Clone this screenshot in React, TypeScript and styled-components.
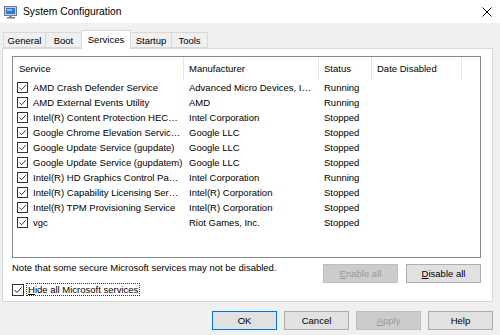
import styled, { createGlobalStyle } from "styled-components";

const GlobalStyle = createGlobalStyle`
  html, body {
    margin: 0;
    padding: 0;
    background: #f0f0f0;
  }
  body {
    font-family: "Liberation Sans", Arial, sans-serif;
    font-size: 9.5px;
    color: #000;
  }
  * {
    box-sizing: border-box;
  }
`;

const Window = styled.div`
  width: 500px;
  height: 335px;
  background: #f0f0f0;
  display: flex;
  flex-direction: column;
  overflow: hidden;
`;

const TitleBar = styled.div`
  height: 23px;
  background: #fff;
  display: flex;
  align-items: center;
  justify-content: space-between;
  padding: 0 8px 0 4px;
`;

const TitleLeft = styled.div`
  display: flex;
  align-items: center;
  gap: 5px;
  font-size: 10.3px;
`;

const TabStrip = styled.div`
  margin-top: 7px;
  padding-left: 3px;
  height: 18px;
  display: flex;
  align-items: flex-end;
  position: relative;
  z-index: 1;
`;

const Tab = styled.div<{ $w: number; $active?: boolean }>`
  width: ${(p) => p.$w}px;
  height: ${(p) => (p.$active ? 19 : 16)}px;
  margin-bottom: ${(p) => (p.$active ? -1 : 0)}px;
  margin-left: -1px;
  border: 1px solid #d9d9d9;
  border-bottom: ${(p) => (p.$active ? "none" : "1px solid #d9d9d9")};
  background: ${(p) => (p.$active ? "#fff" : "#f0f0f0")};
  display: flex;
  align-items: center;
  justify-content: center;
  padding-bottom: ${(p) => (p.$active ? 2 : 0)}px;
  &:first-child {
    margin-left: 0;
  }
`;

const Panel = styled.div`
  margin-left: 2px;
  width: 491px;
  height: 254px;
  border: 1px solid #d9d9d9;
  background: #fff;
  padding: 7px 0 0 9px;
  display: flex;
  flex-direction: column;
`;

const ListView = styled.div`
  width: 469px;
  height: 202px;
  border: 1px solid #828790;
  background: #fff;
`;

const cols = "171px 135px 53px 90px 1fr";

const HeaderRow = styled.div`
  height: 23px;
  display: grid;
  grid-template-columns: ${cols};
`;

const HeaderCell = styled.div`
  display: flex;
  align-items: center;
  padding-left: 5px;
  border-right: 1px solid #e5e5e5;
  &:first-child {
    padding-left: 6px;
  }
  &:last-child {
    border-right: none;
  }
`;

const Row = styled.div`
  height: 15px;
  display: grid;
  grid-template-columns: ${cols};
`;

const Cell = styled.div`
  display: flex;
  align-items: center;
  padding-left: 5px;
  white-space: nowrap;
  overflow: hidden;
`;

const ServiceCell = styled(Cell)`
  padding-left: 4px;
  gap: 5px;
`;

const Box = styled.span<{ $size: number }>`
  width: ${(p) => p.$size}px;
  height: ${(p) => p.$size}px;
  border: 1px solid #333;
  background: #fff;
  display: inline-flex;
  align-items: center;
  justify-content: center;
  flex-shrink: 0;
`;

const FooterRow = styled.div`
  margin-top: 6px;
  width: 469px;
  display: flex;
  align-items: flex-start;
  justify-content: space-between;
`;

const Note = styled.span`
  margin-top: -2px;
  line-height: 12px;
`;

const ButtonGroup = styled.div<{ $gap: number }>`
  display: flex;
  gap: ${(p) => p.$gap}px;
`;

const Button = styled.div<{ $w: number; $disabled?: boolean; $default?: boolean }>`
  width: ${(p) => p.$w}px;
  height: 19px;
  display: flex;
  align-items: center;
  justify-content: center;
  background: ${(p) => (p.$disabled ? "#cccccc" : "#e1e1e1")};
  border: 1px solid
    ${(p) => (p.$default ? "#0078d7" : p.$disabled ? "#bfbfbf" : "#adadad")};
  color: ${(p) => (p.$disabled ? "#9a9a9a" : "#000")};
  u {
    text-decoration: underline;
  }
`;

const HideRow = styled.div`
  display: flex;
  align-items: center;
  gap: 2px;
`;

const FocusLabel = styled.span`
  border: 1px dotted #333;
  padding: 0 1px;
  line-height: 11px;
`;

const BottomBar = styled.div`
  margin-top: 9px;
  padding-right: 7px;
  display: flex;
  justify-content: flex-end;
`;

function Check({ size }: { size: number }) {
  return (
    <Box $size={size}>
      <svg width={size - 2} height={size - 2} viewBox="0 0 10 10">
        <path d="M1.5 5 L4 7.5 L8.6 2.4" fill="none" stroke="#222" strokeWidth="1" />
      </svg>
    </Box>
  );
}

function AppIcon() {
  return (
    <svg width="14" height="14" viewBox="0 0 14 14">
      <rect x="0.5" y="1.5" width="12" height="9" fill="#c9d2dc" stroke="#6c7a8a" />
      <rect x="2" y="3" width="9" height="6" fill="#2f79d6" />
      <rect x="3" y="4" width="5" height="2" fill="#8cc2f2" />
      <rect x="5" y="10.5" width="3" height="1.5" fill="#8a96a3" />
      <rect x="3" y="12" width="8" height="1.5" fill="#6c7a8a" />
    </svg>
  );
}

const services = [
  ["AMD Crash Defender Service", "Advanced Micro Devices, I…", "Running"],
  ["AMD External Events Utility", "AMD", "Running"],
  ["Intel(R) Content Protection HEC…", "Intel Corporation", "Stopped"],
  ["Google Chrome Elevation Servic…", "Google LLC", "Stopped"],
  ["Google Update Service (gupdate)", "Google LLC", "Stopped"],
  ["Google Update Service (gupdatem)", "Google LLC", "Stopped"],
  ["Intel(R) HD Graphics Control Pa…", "Intel Corporation", "Running"],
  ["Intel(R) Capability Licensing Ser…", "Intel(R) Corporation", "Stopped"],
  ["Intel(R) TPM Provisioning Service", "Intel(R) Corporation", "Stopped"],
  ["vgc", "Riot Games, Inc.", "Stopped"],
];

const tabs = [
  { label: "General", w: 43 },
  { label: "Boot", w: 37 },
  { label: "Services", w: 50, active: true },
  { label: "Startup", w: 42 },
  { label: "Tools", w: 37 },
];

export default function App() {
  return (
    <Window>
      <GlobalStyle />
      <TitleBar>
        <TitleLeft>
          <AppIcon />
          System Configuration
        </TitleLeft>
        <svg width="10" height="10" viewBox="0 0 10 10">
          <path d="M0.5 0.5 L9.5 9.5 M9.5 0.5 L0.5 9.5" stroke="#000" strokeWidth="1" />
        </svg>
      </TitleBar>
      <TabStrip>
        {tabs.map((t) => (
          <Tab key={t.label} $w={t.w} $active={t.active}>
            {t.label}
          </Tab>
        ))}
      </TabStrip>
      <Panel>
        <ListView>
          <HeaderRow>
            <HeaderCell>Service</HeaderCell>
            <HeaderCell>Manufacturer</HeaderCell>
            <HeaderCell>Status</HeaderCell>
            <HeaderCell>Date Disabled</HeaderCell>
            <HeaderCell />
          </HeaderRow>
          {services.map(([name, maker, status]) => (
            <Row key={name}>
              <ServiceCell>
                <Check size={11} />
                {name}
              </ServiceCell>
              <Cell>{maker}</Cell>
              <Cell>{status}</Cell>
              <Cell />
              <Cell />
            </Row>
          ))}
        </ListView>
        <FooterRow>
          <Note>Note that some secure Microsoft services may not be disabled.</Note>
          <ButtonGroup $gap={8}>
            <Button $w={75} $disabled>
              <span>
                <u>E</u>nable all
              </span>
            </Button>
            <Button $w={75}>
              <span>
                <u>D</u>isable all
              </span>
            </Button>
          </ButtonGroup>
        </FooterRow>
        <HideRow>
          <Check size={12} />
          <FocusLabel>
            <u>H</u>ide all Microsoft services
          </FocusLabel>
        </HideRow>
      </Panel>
      <BottomBar>
        <ButtonGroup $gap={7}>
          <Button $w={65} $default>
            OK
          </Button>
          <Button $w={65}>Cancel</Button>
          <Button $w={65} $disabled>
            <span>
              <u>A</u>pply
            </span>
          </Button>
          <Button $w={65}>Help</Button>
        </ButtonGroup>
      </BottomBar>
    </Window>
  );
}
